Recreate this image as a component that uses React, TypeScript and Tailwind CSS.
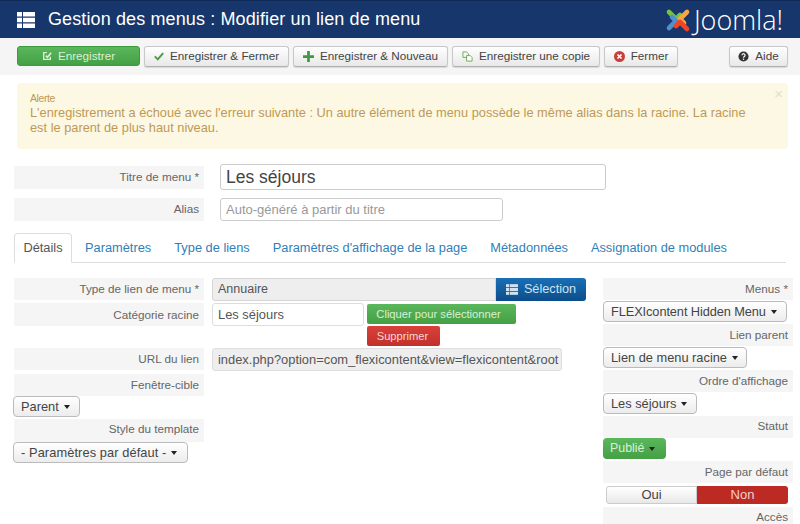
import React from "react";

const font = "font-['Liberation_Sans',Arial,sans-serif]";

function MenuIcon({ className }: { className: string }) {
  return (
    <svg viewBox="0 0 18 16" className={className} fill="currentColor">
      <rect x="0" y="0" width="5" height="4.5" />
      <rect x="6" y="0" width="12" height="4.5" />
      <rect x="0" y="5.75" width="5" height="4.5" />
      <rect x="6" y="5.75" width="12" height="4.5" />
      <rect x="0" y="11.5" width="5" height="4.5" />
      <rect x="6" y="11.5" width="12" height="4.5" />
    </svg>
  );
}

function JoomlaLogo() {
  return (
    <svg viewBox="0 0 26 26" className="w-[26px] h-[26px]" fill="none" strokeWidth="4.6" strokeLinecap="round" strokeLinejoin="round">
      <path d="M4 5 11 12 15 8" stroke="#7ac143" />
      <path d="M22 5 15 12 19 16" stroke="#f9a541" />
      <path d="M4 21 11 14 7 10" stroke="#5091cd" />
      <path d="M22 22 15 15 11 19" stroke="#f44321" />
    </svg>
  );
}

function ToolButton({ icon, label, className }: { icon: React.ReactNode; label: string; className: string }) {
  return (
    <button className={`h-[21px] flex items-center justify-center gap-[6px] rounded-[3px] border border-[#c8c8c8] border-b-[#b0b0b0] bg-gradient-to-b from-white to-[#e8e8e8] text-[11.7px] text-[#444] shadow-[0_1px_1px_rgba(0,0,0,0.12)] ${className}`}>
      {icon}
      {label}
    </button>
  );
}

function Label({ children, className = "" }: { children: React.ReactNode; className?: string }) {
  return (
    <div className={`h-[22px] pr-[5px] flex items-center justify-end bg-[#f5f5f5] text-[11.7px] text-[#666] ${className}`}>
      {children}
    </div>
  );
}

function Caret() {
  return <span className="inline-block ml-[5px] w-0 h-0 border-x-[3.5px] border-x-transparent border-t-[4px] border-t-[#222]" />;
}

function Dropdown({ label, className = "" }: { label: string; className?: string }) {
  return (
    <button className={`h-[21px] pl-[7px] pr-[9px] flex items-center rounded-[4px] border border-[#bbb] bg-gradient-to-b from-white to-[#ececec] text-[12.8px] text-[#444] whitespace-nowrap ${className}`}>
      {label}
      <Caret />
    </button>
  );
}

export default function App() {
  return (
    <div className={`w-[800px] h-[524px] overflow-hidden bg-white ${font}`}>
      <header className="h-[38px] pl-[17px] pr-[17px] flex items-center bg-[#17366b] border-t border-[#0f2a58]">
        <MenuIcon className="w-[18px] h-[16px] text-white" />
        <h1 className="ml-[13px] text-[18px] tracking-[0.12px] text-white">Gestion des menus : Modifier un lien de menu</h1>
        <div className="ml-auto flex items-center gap-[3px]">
          <JoomlaLogo />
          <span className="text-[27px] leading-none font-['Open_Sans',sans-serif] font-light text-white">Joomla!</span>
        </div>
      </header>

      <nav className="h-[37px] pl-[17px] pr-[12px] pb-[1px] flex items-center bg-[#f5f5f5]">
        <button className="w-[123px] h-[20px] flex items-center justify-center gap-[6px] rounded-[3px] border border-[#3b9a3b] bg-gradient-to-b from-[#5bb75b] to-[#45a045] text-[11.7px] text-[#d8f0d8] mr-[4px]">
          <svg viewBox="0 0 12 12" className="w-[10px] h-[10px]" fill="none" stroke="currentColor" strokeWidth="1.6">
            <path d="M10 7v3H2V2h4" />
            <path d="M4.5 5.5 6.5 7.5 11 2" strokeWidth="2" />
          </svg>
          Enregistrer
        </button>
        <ToolButton
          className="w-[145px] mr-[4px]"
          label="Enregistrer & Fermer"
          icon={
            <svg viewBox="0 0 12 12" className="w-[10px] h-[10px]" fill="none" stroke="#4a9e4a" strokeWidth="2.4">
              <path d="M1 6.5 4.5 10 11 2.5" />
            </svg>
          }
        />
        <ToolButton
          className="w-[155px] mr-[4px]"
          label="Enregistrer & Nouveau"
          icon={
            <svg viewBox="0 0 12 12" className="w-[11px] h-[11px]" fill="#3f9a3f">
              <path d="M4.5 0h3v4.5H12v3H7.5V12h-3V7.5H0v-3h4.5z" />
            </svg>
          }
        />
        <ToolButton
          className="w-[148px] mr-[4px]"
          label="Enregistrer une copie"
          icon={
            <svg viewBox="0 0 12 12" className="w-[11px] h-[11px]" fill="none" stroke="#6aa84f" strokeWidth="1">
              <path d="M1 1h4l2 2v4H1z" />
              <path d="M5 5h4l2 2v4H5z" fill="#fff" />
            </svg>
          }
        />
        <ToolButton
          className="w-[74px]"
          label="Fermer"
          icon={
            <svg viewBox="0 0 12 12" className="w-[11px] h-[11px]">
              <circle cx="6" cy="6" r="6" fill="#c9403a" />
              <path d="M3.8 3.8 8.2 8.2M8.2 3.8 3.8 8.2" stroke="#fff" strokeWidth="1.8" />
            </svg>
          }
        />
        <ToolButton
          className="w-[59px] ml-auto"
          label="Aide"
          icon={
            <svg viewBox="0 0 12 12" className="w-[11px] h-[11px]">
              <circle cx="6" cy="6" r="5.5" fill="#333" />
              <path d="M4.3 4.6a1.7 1.7 0 1 1 2.6 1.5c-.6.4-.9.6-.9 1.2" fill="none" stroke="#fff" strokeWidth="1.3" />
              <rect x="5.3" y="8.2" width="1.4" height="1.4" fill="#fff" />
            </svg>
          }
        />
      </nav>

      <div className="relative mt-[8px] ml-[17px] w-[771px] h-[66px] pl-[13px] pt-[8px] rounded-[4px] bg-[#fcf8e3] text-[#c09853]">
        <div className="text-[10.5px] leading-[14px] tracking-[-0.4px]">Alerte</div>
        <p className="text-[12.8px] leading-[15px]">
          L'enregistrement a échoué avec l'erreur suivante : Un autre élément de menu possède le même alias dans la racine. La racine
          <br />
          est le parent de plus haut niveau.
        </p>
        <span className="absolute right-[5px] top-[3px] text-[15px] leading-none text-[#e4e0cc]">×</span>
      </div>

      <div className="mt-[15px] ml-[14px] flex items-center gap-[16px]">
        <Label className="w-[190px] h-[23px] pb-[1px]">Titre de menu *</Label>
        <input
          readOnly
          value="Les séjours"
          className="w-[386px] h-[26px] px-[5px] rounded-[3px] border border-[#ccc] text-[17.5px] text-[#444] outline-none"
        />
      </div>
      <div className="mt-[8px] ml-[14px] flex items-center gap-[16px]">
        <Label className="w-[190px] h-[23px] pb-[1px]">Alias</Label>
        <input
          readOnly
          placeholder="Auto-généré à partir du titre"
          className="w-[283px] h-[23px] px-[5px] rounded-[3px] border border-[#ccc] text-[13px] placeholder:text-[#999] outline-none"
        />
      </div>

      <div className="mt-[12px] ml-[14px] mr-[14px] h-[30px] flex items-end gap-[13px] border-b border-[#ddd] text-[12.82px] text-[#2f7fb8]">
        <div className="w-[58px] h-[30px] -mb-px flex items-center justify-center rounded-t-[4px] border border-[#ddd] border-b-white bg-white text-[#555]">
          Détails
        </div>
        <div className="h-[29px] flex items-center">Paramètres</div>
        <div className="h-[29px] flex items-center ml-[10px]">Type de liens</div>
        <div className="h-[29px] flex items-center ml-[10px]">Paramètres d'affichage de la page</div>
        <div className="h-[29px] flex items-center ml-[10px]">Métadonnées</div>
        <div className="h-[29px] flex items-center ml-[10px]">Assignation de modules</div>
      </div>

      <div className="mt-[15px] ml-[14px] flex">
        <div className="w-[190px] shrink-0 flex flex-col">
          <Label>Type de lien de menu *</Label>
          <Label className="mt-[3px] h-[23px]">Catégorie racine</Label>
          <Label className="mt-[22px]">URL du lien</Label>
          <Label className="mt-[4px] h-[21px] pb-[1px]">Fenêtre-cible</Label>
          <Dropdown label="Parent" className="self-start -ml-px" />
          <Label className="mt-[2px] h-[23px] pb-[3px]">Style du template</Label>
          <Dropdown label="- Paramètres par défaut -" className="self-start -ml-px w-[175px] tracking-[0.1px]" />
        </div>

        <div className="w-[374px] ml-[8px] shrink-0 flex flex-col text-[12.9px] text-[#555]">
          <div className="flex h-[23px]">
            <div className="flex-1 px-[5px] flex items-center rounded-l-[3px] border border-[#d5d5d5] bg-[#eee] text-[12.5px]">Annuaire</div>
            <button className="w-[90px] flex items-center justify-center gap-[6px] rounded-r-[3px] bg-gradient-to-b from-[#1a6fb5] to-[#0d4d8a] text-[12.7px] text-[#d0e2f2]">
              <MenuIcon className="w-[12px] h-[11px]" />
              Sélection
            </button>
          </div>
          <div className="flex mt-[2px] gap-[3px]">
            <input
              readOnly
              value="Les séjours"
              className="w-[152px] h-[23px] px-[5px] rounded-[3px] border border-[#ddd] text-[#555] outline-none"
            />
            <div className="flex flex-col gap-[2px] pt-[1px]">
              <button className="w-[149px] h-[20px] pr-[6px] rounded-[2px] bg-gradient-to-b from-[#5bb75b] to-[#45a045] text-[11.2px] text-[#d8f0d8]">
                Cliquer pour sélectionner
              </button>
              <button className="w-[73px] h-[20px] pr-[2px] rounded-[2px] bg-gradient-to-b from-[#d9413a] to-[#c0312b] text-[11.2px] text-[#f5d5d3]">
                Supprimer
              </button>
            </div>
          </div>
          <div className="mt-[2px] w-[350px] h-[23px] px-[5px] flex items-center rounded-[3px] border border-[#ddd] bg-[#eee] whitespace-nowrap overflow-hidden">
            index.php?option=com_flexicontent&view=flexicontent&root
          </div>
        </div>

        <div className="w-[190px] ml-[17px] shrink-0 flex flex-col">
          <Label>Menus *</Label>
          <Dropdown label="FLEXIcontent Hidden Menu" className="self-start mt-px w-[184px] tracking-[-0.1px]" />
          <Label className="mt-[2px] pb-[1px]">Lien parent</Label>
          <Dropdown label="Lien de menu racine" className="self-start mt-px w-[144px]" />
          <Label className="mt-[2px] pb-[1px]">Ordre d'affichage</Label>
          <Dropdown label="Les séjours" className="self-start mt-px" />
          <Label className="mt-[2px] pb-[2px]">Statut</Label>
          <button className="self-start w-[63px] h-[21px] pl-[7px] flex items-center rounded-[4px] bg-gradient-to-b from-[#5bb75b] to-[#45a045] text-[12.4px] text-[#d8f0d8]">
            Publié
            <Caret />
          </button>
          <Label className="mt-[2px]">Page par défaut</Label>
          <div className="mt-[3px] ml-[3px] flex w-[182px] h-[18px] text-[13px]">
            <div className="w-[91px] flex items-center justify-center rounded-l-[3px] border border-[#ccc] bg-gradient-to-b from-white to-[#e8e8e8] text-[#444]">
              Oui
            </div>
            <div className="flex-1 flex items-center justify-center rounded-r-[3px] bg-[#bd2a24] text-[#f0d0ce]">Non</div>
          </div>
          <Label className="mt-[3px] h-[16px] pb-[2px] leading-none">Accès</Label>
        </div>
      </div>
    </div>
  );
}
